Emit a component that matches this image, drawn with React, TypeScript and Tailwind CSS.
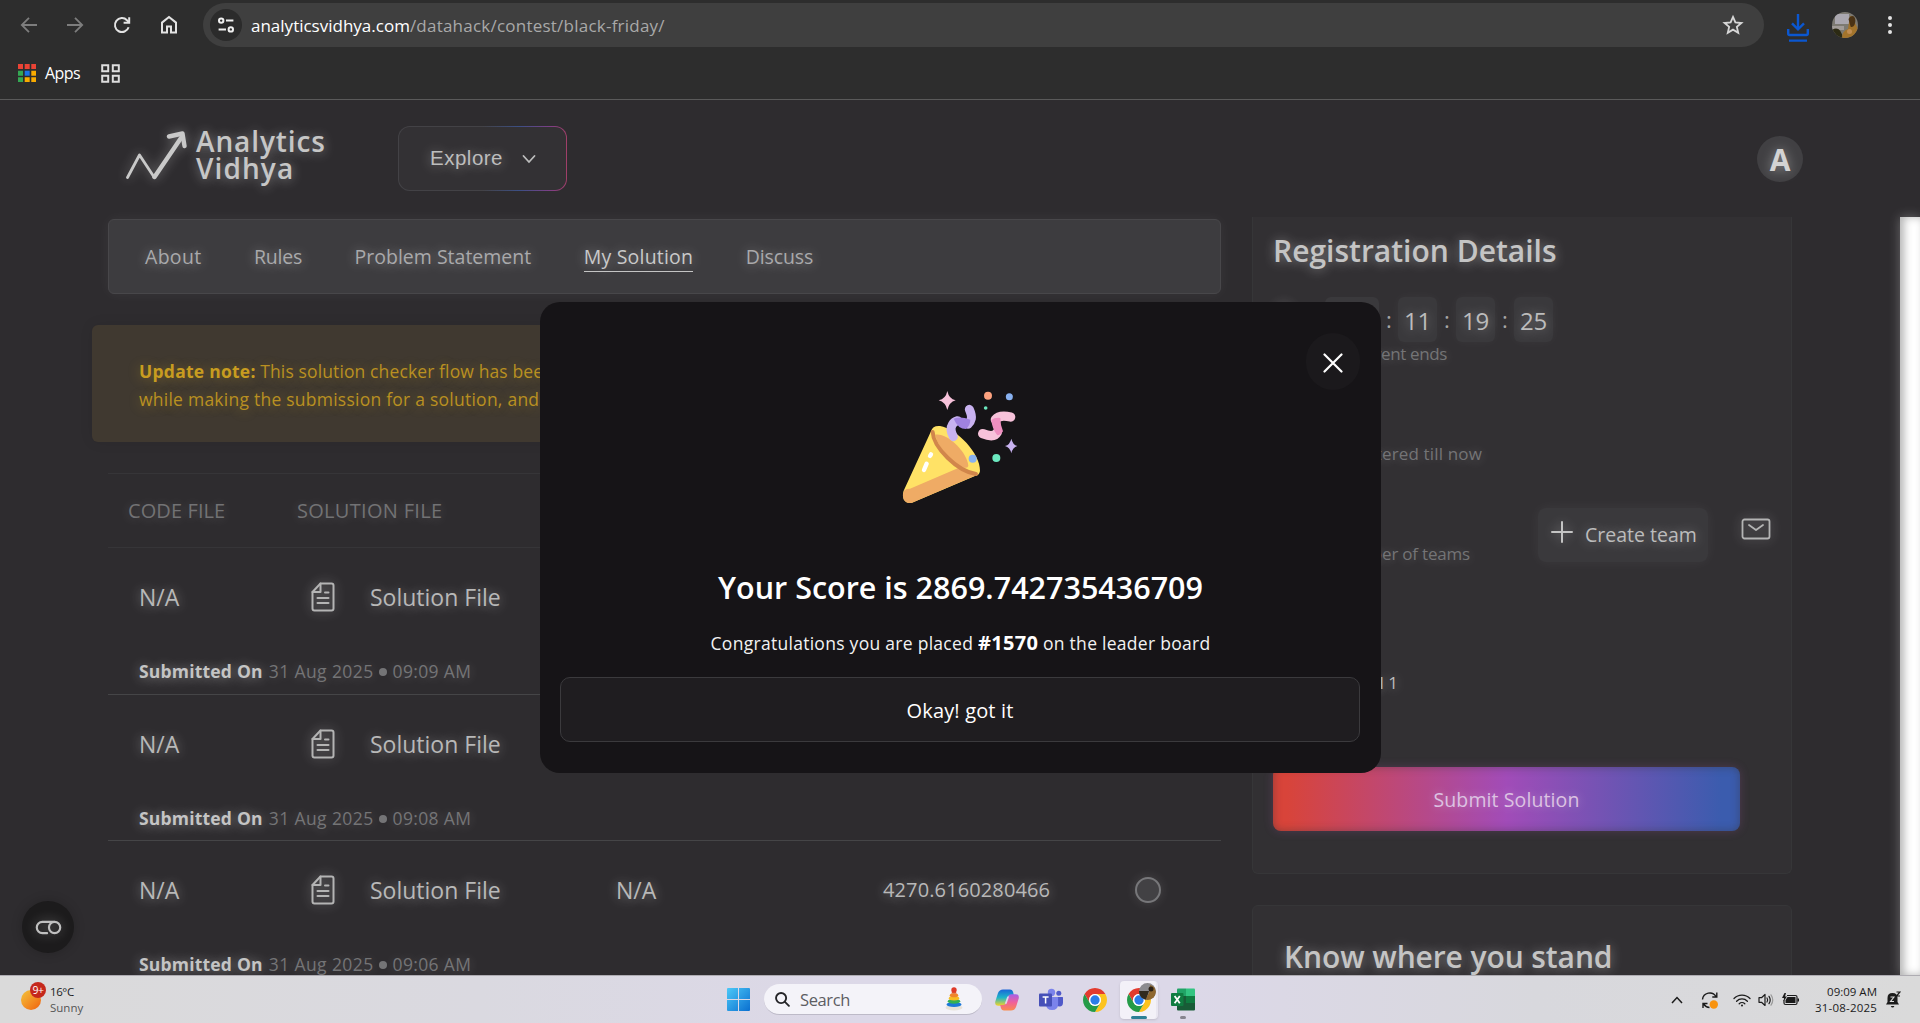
import type { ReactNode } from "react";

const glow = "[text-shadow:0_1px_12px_rgba(255,255,255,0.42)]";
const softGlow = "[text-shadow:0_1px_12px_rgba(255,255,255,0.22)]";
const iconGlow = "drop-shadow-[0_0_6px_rgba(255,255,255,0.35)]";

function BrowserBar() {
  return (
    <div className="h-[100px] border-b border-[#5a5a5a] bg-[#2d2d2d]">
      <div className="flex h-[50px] items-center pl-[18px] pr-[21px]">
        <svg className="size-[22px]" viewBox="0 0 22 22" fill="none" stroke="#7d7d7d" strokeWidth="1.8">
          <path d="M19 11H4M11 3.8 3.8 11l7.2 7.2" />
        </svg>
        <svg className="ml-[24px] size-[22px]" viewBox="0 0 22 22" fill="none" stroke="#7d7d7d" strokeWidth="1.8">
          <path d="M3 11h15M11 3.8l7.2 7.2-7.2 7.2" />
        </svg>
        <svg className="ml-[25px] size-[22px]" viewBox="0 0 22 22" fill="none" stroke="#e3e3e3" strokeWidth="2">
          <path d="M17.6 13.2A7 7 0 1 1 16 6.2l2 2" />
          <path d="M18.2 3.2v5.6h-5.6" />
        </svg>
        <svg className="ml-[25px] size-[22px]" viewBox="0 0 22 22" fill="none" stroke="#e3e3e3" strokeWidth="2">
          <path d="M4 18.5V8.6l7-5.6 7 5.6v9.9h-5v-6H9v6z" />
        </svg>
        <div className="ml-[23px] flex h-11 w-[1561px] items-center rounded-full bg-[#3f3f3f] pl-[7px] pr-[20px]">
          <div className="flex size-8 items-center justify-center rounded-full bg-[#2b2b2b]">
            <svg className="size-[18px]" viewBox="0 0 18 18" fill="none" stroke="#f1f1f1" strokeWidth="2">
              <circle cx="4.2" cy="4.6" r="2.2" />
              <path d="M9 4.6h7.4M1.6 13.4H9" />
              <circle cx="13.8" cy="13.4" r="2.2" />
            </svg>
          </div>
          <div className="ml-[9px] grow whitespace-nowrap pt-px text-[17px] leading-6 text-[#a9a9a9]">
            <span className="text-white">analyticsvidhya.com</span>
            <span className="tracking-[0.23px]">/datahack/contest/black-friday/</span>
          </div>
          <svg className="size-[22px]" viewBox="0 0 24 24" fill="none" stroke="#d6d6d6" strokeWidth="2">
            <path d="m12 3.2 2.6 6 6.6.6-5 4.3 1.5 6.4L12 17.1l-5.7 3.4 1.5-6.4-5-4.3 6.600-.6z" />
          </svg>
        </div>
        <svg className="ml-[22px] mt-[6px] h-[30px] w-[24px]" viewBox="0 0 24 30" fill="none" stroke="#0b57d0" strokeWidth="2.4">
          <path d="M12 1v15M6 10.4l6 6 6-6M2.2 16v4.6q0 1.4 1.4 1.4h16.8q1.4 0 1.4-1.4V16M3 27.6h18" />
        </svg>
        <svg className="ml-[22px] size-[26px] rounded-full" viewBox="0 0 26 26">
          <rect width="26" height="26" fill="#7d7a72" />
          <path d="M3 2h14v10H3z" fill="#aaa7af" />
          <path d="M0 14h12v4H0z" fill="#a29c98" />
          <path d="M0 18q8-5 11 8H0z" fill="#2c2a14" />
          <path d="M18 4q5 0 5 7l3 6v9H10q0-7 6-9l1-7z" fill="#a3742c" />
          <path d="M16.500 7q2-4 5.500-2.500 2.500 3 .5 8.500-2 3-4 1.500z" fill="#4b3315" />
          <circle cx="17.500" cy="19.500" r="2.500" fill="#c08d52" />
        </svg>
        <svg className="ml-auto h-[20px] w-[6px] -translate-x-1.5" viewBox="0 0 6 20" fill="#e3e3e3">
          <circle cx="3" cy="3" r="2" /><circle cx="3" cy="10" r="2" /><circle cx="3" cy="17" r="2" />
        </svg>
      </div>
      <div className="flex h-[46px] items-center pl-[18px]">
        <svg className="size-[18px]" viewBox="0 0 18 18">
          <g fill="#ea4335"><path d="M0 0h5v5H0zM6.7 0h5v5h-5zM13.3 0h4.7v5h-4.7z" /></g>
          <g fill="#34a853"><path d="M0 6.7h5v5H0zM0 13.3h5V18H0z" /></g>
          <path fill="#1a73e8" d="M6.7 6.7h5v5h-5z" />
          <path fill="#f9ab00" d="M13.3 6.7h4.7v5h-4.7zM6.7 13.3h5V18h-5zM13.3 13.3h4.7V18h-4.7z" />
        </svg>
        <span className="ml-[9px] text-[16px] leading-6 tracking-[-0.6px] text-white">Apps</span>
        <svg className="ml-[21px] size-[19px]" viewBox="0 0 19 19" fill="none" stroke="#dedede" strokeWidth="2">
          <path d="M1.2 1.2h6v6h-6zM11.8 1.2h6v6h-6zM1.2 11.8h6v6h-6zM11.8 11.8h6v6h-6z" />
        </svg>
      </div>
    </div>
  );
}

function SiteHeader() {
  return (
    <header className="flex h-[117px] items-start pl-[125px] pr-[117px]">
      <svg className={`mt-[29px] h-[54px] w-[64px] ${iconGlow}`} viewBox="0 0 64 54" fill="none" stroke="#c9c9c9" strokeLinecap="round" strokeLinejoin="round">
        <path strokeWidth="2.8" d="M2.500 48.500 14.500 26l14.500 22" />
        <path strokeWidth="4.400" d="M29.500 48 56 9" />
        <path strokeWidth="4.400" d="M44 7.500 57.500 4.500 59.500 17" />
      </svg>
      <div className={`ml-[7px] mt-[28px] text-[28px] font-semibold leading-[27px] text-[#c6c6c6] ${glow}`}>
        <div className="tracking-[0.9px]">Analytics</div>
        <div className="tracking-[1.1px]">Vidhya</div>
      </div>
      <div className="ml-auto mr-[1190px] mt-[26px] h-[65px] w-[169px] shrink-0 rounded-xl bg-[linear-gradient(90deg,#434246_0%,#434246_50%,#3c4f85_72%,#7d3f86_90%,#a03f68_100%)] p-px">
        <div className={`flex h-full items-center rounded-[11px] bg-[#333134] pl-[31px] font-['Liberation_Sans'] text-[20.5px] tracking-[0.5px] text-[#bdbdbd] ${glow}`}>
          Explore
          <svg className="ml-[19px] size-[14px]" viewBox="0 0 14 14" fill="none" stroke="#bdbdbd" strokeWidth="1.8" strokeLinecap="round">
            <path d="m1.500 4 5.500 6 5.500-6" />
          </svg>
        </div>
      </div>
      <div className="mt-[36px] flex size-[46px] shrink-0 items-center justify-center rounded-full bg-[#414043]">
        <span className={`pt-0.5 text-[30px] font-bold leading-none text-[#d3d3d3] ${glow}`}>A</span>
      </div>
    </header>
  );
}

function FileIcon() {
  return (
    <svg className={`ml-px h-[30px] w-[24px] ${iconGlow}`} viewBox="0 0 24 30" fill="none" stroke="#b4b4b4" strokeWidth="2" strokeLinecap="round" strokeLinejoin="round">
      <path d="M9.500 1.500h11q2 0 2 2v23q0 2-2 2h-17q-2 0-2-2V10z" />
      <path d="M9.500 1.500V10h-8M14 10.500h3.500M6.500 16h11M6.500 21h11" />
    </svg>
  );
}

type Entry = { time: string; code: string; score: string };

function SubmissionRow({ time, code, score }: Entry) {
  return (
    <div className="h-[146.5px] border-b border-[#454547] pl-[31px] pt-[33px]">
      <div className={`flex h-8 items-center whitespace-nowrap text-[23px] leading-8 text-[#b8b8b8] ${glow}`}>
        <span className="w-[171px]">N/A</span>
        <span className="w-[60px]"><FileIcon /></span>
        <span className="w-[246px]">Solution File</span>
        {score && (
          <>
            <span className="w-[267px]">{code}</span>
            <span className="w-[252px] text-[20px] tracking-[0.12px]">{score}</span>
            <span className="size-[26px] rounded-full border-2 border-[#77777a] bg-[#424144] shadow-[0_0_12px_rgba(255,255,255,0.12)]" />
          </>
        )}
      </div>
      <div className={`mt-[46px] flex h-6 items-center text-[17.5px] leading-6 text-[#747476] ${softGlow}`}>
        <span className={`tracking-[0.2px] font-bold text-[#c4c4c4] ${glow}`}>Submitted On</span>
        <span className="ml-[6px] tracking-[0.4px]">31 Aug 2025</span>
        <span className="ml-[5px] mt-0.5 size-2 rounded-full bg-[#747476]" />
        <span className="ml-[6px] tracking-[0.35px]">{time}</span>
      </div>
    </div>
  );
}

const entries: Entry[] = [
  { time: "09:09 AM", code: "", score: "" },
  { time: "09:08 AM", code: "", score: "" },
  { time: "09:06 AM", code: "N/A", score: "4270.6160280466" },
];

function ContestColumn() {
  return (
    <section className="w-[1129px] shrink-0 pt-[2px]">
      <nav className={`ml-[16px] flex h-[75px] items-center gap-[52.5px] rounded-md border border-[#48474a] bg-[#3d3c3f] pl-[36px] text-[19.5px] leading-7 text-[#a9a9ab] shadow-[0_0_14px_rgba(255,255,255,0.05)] ${glow}`}>
        <span className="tracking-[0.3px]">About</span>
        <span className="tracking-[-0.2px]">Rules</span>
        <span>Problem Statement</span>
        <span className="mt-px border-b border-[#c4c4c4] tracking-[0.2px] text-[#c9c9c9]">My Solution</span>
        <span className="tracking-[-0.1px]">Discuss</span>
      </nav>
      <div className="mt-[31px] h-[117px] rounded-md bg-[#403930] pl-[47px] pt-[32px] text-[17.5px] leading-7 text-[#b99021] shadow-[0_0_14px_rgba(0,0,0,0.08)] [text-shadow:0_1px_12px_rgba(200,160,40,0.4)]">
        <div className="whitespace-nowrap">
          <b className="font-bold tracking-[0.25px] text-[#c89c20]">Update note:</b>{" "}
          <span className="tracking-[0.12px]">This solution checker flow has been</span>
        </div>
        <div className="tracking-[0.24px] whitespace-nowrap">while making the submission for a solution, and</div>
      </div>
      <div className="ml-[16px] mt-[31px]">
        <div className={`flex h-[75px] border-y border-[#363538] pl-[20px] pt-[23px] text-[20px] leading-7 text-[#727274] ${softGlow}`}>
          <span className="w-[169px] tracking-[0.1px]">CODE FILE</span>
          <span className="tracking-[0.3px]">SOLUTION FILE</span>
        </div>
        {entries.map((e) => (
          <SubmissionRow key={e.time} {...e} />
        ))}
      </div>
    </section>
  );
}

function Tile({ children }: { children: ReactNode }) {
  return (
    <span className={`flex h-[45px] w-[39px] items-center justify-center rounded-md bg-[#3a393c] pt-0.5 text-[24px] tracking-[-0.2px] text-[#bcbcbc] shadow-[0_0_12px_rgba(255,255,255,0.04)] ${glow}`}>
      {children}
    </span>
  );
}

function Colon() {
  return <span className="w-[19px] pl-px text-center text-[22px] text-[#a5a5a5]">:</span>;
}

function DetailsColumn() {
  return (
    <aside className="ml-[31px] w-[540px] shrink-0">
      <div className="h-[657px] rounded-b-md border border-t-0 border-[#363638] bg-[#323033] pl-[22px] pt-[14px]">
        <h2 className={`-ml-[2px] text-[30px] font-semibold leading-10 text-[#c4c4c4] ${glow}`}>Registration Details</h2>
        <div className="mt-[26px] flex h-[45px] items-center">
          <span className="mr-[32px] mb-[14px] size-[18px] rounded-full bg-[#5a595c] shadow-[0_0_12px_2px_rgba(255,255,255,0.14)]" />
          <span className="h-[45px] w-[54px] rounded-md bg-[#3a393c]" />
          <Colon /><Tile>11</Tile><Colon /><Tile>19</Tile><Colon /><Tile>25</Tile>
        </div>
        <div className={`w-[172px] text-right text-[17px] leading-6 tracking-[-0.37px] text-[#747476] ${softGlow}`}>Event ends</div>
        <div className={`mt-[76px] w-[207px] text-right text-[17px] leading-6 tracking-[0.15px] text-[#747476] ${softGlow}`}>Registered till now</div>
        <div className="mt-[42px] flex h-[57px] items-start">
          <span className={`mt-[34px] w-[195px] text-right text-[17px] leading-6 tracking-[-0.2px] text-[#747476] ${softGlow}`}>Number of teams</span>
          <div className={`ml-[68px] flex h-[54px] w-[170px] rounded-lg bg-[#3a393c] pl-[13px] shadow-[0_0_14px_rgba(255,255,255,0.05)] ${glow}`}>
            <svg className={`mt-[13px] size-[22px] ${iconGlow}`} viewBox="0 0 22 22" stroke="#c4c4c4" strokeWidth="2" strokeLinecap="round">
              <path d="M11 1v20M1 11h20" />
            </svg>
            <span className="ml-[12px] mt-[13px] text-[19.5px] leading-7 whitespace-nowrap text-[#bcbcbc]">Create team</span>
          </div>
          <svg className={`ml-[33px] mt-[10px] h-[22px] w-[30px] ${iconGlow}`} viewBox="0 0 30 22" fill="none" stroke="#b4b4b4" strokeWidth="1.8" strokeLinecap="round" strokeLinejoin="round">
            <rect x="1.500" y="1.500" width="27" height="19" rx="2" />
            <path d="m8 7 7 5 7-5" />
          </svg>
        </div>
        <div className={`mt-[106px] w-[123px] text-right text-[17px] leading-6 font-medium text-[#bcbcbc] ${glow}`}>Total 1</div>
        <div className="-ml-[2px] mt-[72px] flex h-[64px] w-[467px] items-center justify-center rounded-lg bg-[linear-gradient(90deg,#d8443a_3%,#a14cb8_50%,#3b5cae_96%)] pt-0.5 text-[19.5px] tracking-[0.1px] text-[#dcc2e2] shadow-[0_0_10px_rgba(170,90,170,0.25),inset_0_0_8px_rgba(50,48,51,0.45)] [text-shadow:0_0_10px_rgba(255,255,255,0.35)]">
          Submit Solution
        </div>
      </div>
      <div className="mt-[31px] h-[200px] rounded-md border border-[#363638] bg-[#323033] pl-[31px] pt-[31px]">
        <h2 className={`text-[30px] font-semibold leading-10 tracking-[-0.1px] text-[#c4c4c4] ${glow}`}>Know where you stand</h2>
      </div>
    </aside>
  );
}

function PartyPopper() {
  return (
    <svg className="-ml-[2px] h-[150px] w-[200px]" viewBox="0 0 600 450" fill="none">
      <path d="M213 184Q218 166 240 168C290 176 362 250 360 303Q358 316 345 318L156 398Q138 402 131 388 126 376 131 362z" fill="#ffe266" />
      <path d="m140 357 10-1 145-62 55 21-194 83q-18 4-25-10-5-12 1-26z" fill="#efab65" />
      <path d="M226 194C262 188 322 246 325 288Q322 298 300 290C268 272 232 228 226 194z" fill="#efab65" />
      <path d="M218 186C220 232 292 304 348 312" stroke="#d1864b" strokeWidth="12" strokeLinecap="round" />
      <path d="m213 253-3 5M200 281l-8 19" stroke="#fff" strokeWidth="13" strokeLinecap="round" />
      <path d="M280 200q-12-22-3-36 5-9 16-12" stroke="#c8b2f0" strokeWidth="27" strokeLinecap="round" />
      <path d="M328 118q8 18 6 28-2 10-10 17" stroke="#c8b2f0" strokeWidth="27" strokeLinecap="round" />
      <path d="M281 146q20-8 50 3 0 16-13 28-24 0-37-31z" fill="#a082e0" />
      <path d="M452 141q-34-8-46 8" stroke="#f7c2da" strokeWidth="28" strokeLinecap="round" />
      <path d="M368 191q34 14 44-4" stroke="#f7c2da" strokeWidth="28" strokeLinecap="round" />
      <path d="M394 150q10-8 27-6 0 20 8 40-8 12-17 12-16-20-18-46z" fill="#ef8fc0" />
      <path d="M262 63q5 24 25 28-20 6-25 29-5-23-26-29 21-4 26-28z" fill="#f7c2da" />
      <path d="M454 206q4 18 18 22-14 4-18 22-4-18-19-22 15-4 19-22z" fill="#c8b2f0" />
      <circle cx="384" cy="77" r="12" fill="#fda27f" />
      <circle cx="448" cy="80" r="10.500" fill="#88b1f0" />
      <circle cx="377" cy="114" r="5.500" fill="#6ce9c0" />
      <circle cx="338" cy="266" r="12" fill="#88b1f0" />
      <circle cx="409" cy="264" r="12" fill="#6ce9c0" />
    </svg>
  );
}

function ScoreDialog() {
  return (
    <div className="absolute left-[540px] top-[302px] flex h-[471px] w-[841px] flex-col items-center rounded-[20px] bg-[#161417] pt-[68px] text-white">
      <div className="absolute right-[21px] top-[31px] flex h-[57px] w-[54px] items-center justify-center rounded-full bg-[#1b191c]">
        <svg className="mt-[3px] size-[20px]" viewBox="0 0 20 20" stroke="#fff" strokeWidth="2.200" strokeLinecap="round">
          <path d="m1.500 1.500 17 17M18.500 1.500l-17 17" />
        </svg>
      </div>
      <PartyPopper />
      <h1 className="mt-[47px] text-[30.5px] font-semibold leading-10">Your Score is 2869.742735436709</h1>
      <p className="mt-[24px] h-6 text-[17.5px] leading-6 tracking-[0.28px] text-[#f2f2f2]">
        Congratulations you are placed <b className="text-[20px] font-bold leading-none tracking-[0.3px] text-white">#1570</b> on the leader board
      </p>
      <div className="-ml-px mt-[22px] flex h-[65px] w-[800px] items-center justify-center rounded-[10px] border border-[#3b3a3d] bg-[#1f1d20] pt-0.5 text-[20px] tracking-[0.15px]">
        Okay! got it
      </div>
    </div>
  );
}

function ChromeIcon() {
  return (
    <svg className="size-[24px]" viewBox="2 2 44 44">
      <path fill="#e33b2e" d="M24 13h19.050A22 22 0 0 0 4.950 13l9.520 16.500A11 11 0 0 1 24 13z" />
      <path fill="#fcc31e" d="M43.050 13A22 22 0 0 1 24 46l9.530-16.500A11 11 0 0 0 24 13z" />
      <path fill="#259b48" d="M24 46A22 22 0 0 1 4.950 13l9.520 16.500a11 11 0 0 0 19.060 0z" />
      <circle cx="24" cy="24" r="11" fill="#fff" />
      <circle cx="24" cy="24" r="8.500" fill="#2b7de9" />
    </svg>
  );
}

function Taskbar() {
  return (
    <footer className="relative flex h-[48px] items-center border-t border-[#aeacb2] bg-[linear-gradient(90deg,#dadada_0%,#dad9e0_25%,#dcd8e8_45%,#dcd8e8_62%,#d8d8dd_80%,#dadada_100%)] pl-[21px] pr-[19px] text-[11.5px] leading-4 text-[#1b1b1b]">
      <div className="relative mt-[-8px] h-[28px] w-[26px]">
        <span className="absolute bottom-0 left-0 size-[20px] rounded-full bg-linear-to-br from-[#f2c33a] to-[#ee5e0b]" />
        <span className="absolute left-[9px] top-0 flex size-[16px] items-center justify-center rounded-full bg-[#c5281c] text-[10.5px] tracking-[-0.5px] text-white">9+</span>
      </div>
      <div className="ml-[3px] w-[677px]">
        <div className="tracking-[-0.4px]">16°C</div>
        <div className="text-[#555]">Sunny</div>
      </div>
      <svg className="size-[23px]" viewBox="0 0 23 23">
        <defs>
          <linearGradient id="win" x2="1" y2="1"><stop stopColor="#4cc8f7" /><stop offset="1" stopColor="#0a6fd0" /></linearGradient>
        </defs>
        <path fill="url(#win)" d="M0 1q0-1 1-1h10v11H0zM12 0h10q1 0 1 1v10H12zM0 12h11v11H1q-1 0-1-1zM12 12h11v10q0 1-1 1H12z" />
      </svg>
      <div className="ml-[14px] flex h-[31px] w-[218px] items-center rounded-full border-b border-[#bdbac8] bg-[#f4f3f9] pl-[11px] pr-[19px] text-[#5d5d63]">
        <svg className="size-[15px]" viewBox="0 0 16 16" fill="none" stroke="#242428" strokeWidth="2" strokeLinecap="round">
          <circle cx="6.500" cy="6.500" r="5.400" /><path d="m10.600 10.600 4.200 4.200" />
        </svg>
        <span className="ml-[10px] pt-px text-[16.5px] leading-6 tracking-[-0.38px]">Search</span>
        <svg className="ml-auto h-[24px] w-[18px]" viewBox="0 0 18 24">
          <ellipse cx="9" cy="20.500" rx="8.500" ry="3" fill="#e8e2d8" />
          <ellipse cx="9" cy="17.500" rx="7.500" ry="2.600" fill="#1c78d8" />
          <ellipse cx="9" cy="14.300" rx="6.200" ry="2.400" fill="#33b052" />
          <ellipse cx="9" cy="11.200" rx="5.200" ry="2.200" fill="#f7bd23" />
          <ellipse cx="9" cy="8.300" rx="4.200" ry="2" fill="#f0852b" />
          <path d="M6.300 6.500 7.500 4h3l1.200 2.500z" fill="#e05a2b" />
          <circle cx="9" cy="2.900" r="2.700" fill="#df3a2a" />
        </svg>
      </div>
      <svg className="ml-[13px] size-[24px]" viewBox="0 0 24 24">
        <defs>
          <linearGradient id="cpA" y2="1" x2="0"><stop stopColor="#1a66d8" /><stop offset=".5" stopColor="#1fb4c8" /><stop offset="1" stopColor="#f3d328" /></linearGradient>
          <linearGradient id="cpB" y2="1" x2="0"><stop stopColor="#a560e8" /><stop offset=".5" stopColor="#f0609a" /><stop offset="1" stopColor="#fb8a4c" /></linearGradient>
        </defs>
        <path fill="url(#cpA)" d="M8 1.500h7q2.500 0 3.200 3l.6 2.500h-3q-2.300 0-3 2.300L10.600 16q-.7 1.700-2.600 1.700H3.300Q-.5 17.700.3 13.500L3 5q1.400-3.500 5-3.500z" />
        <path fill="url(#cpB)" d="M16 22.500H9q-2.500 0-3.200-3L5.200 17h3q2.300 0 3-2.300L13.400 8q.7-1.700 2.600-1.700h4.700q3.800 0 3 4.200L21 19q-1.400 3.500-5 3.500z" />
        <path fill="#dcd8e8" d="m12.300 8.500-2.500 7.300h1.800l2.500-7.300z" />
      </svg>
      <svg className="ml-[20px] size-[24px]" viewBox="0 0 24 24">
        <circle cx="19.800" cy="5.300" r="2.500" fill="#5059c9" />
        <path fill="#5059c9" d="M17 9h6.500q.5 0 .5.600v5q0 4-3.500 4T17 15z" />
        <circle cx="12.500" cy="4.500" r="3.700" fill="#7b83eb" />
        <path fill="#7b83eb" d="M7 9h11.500q.6 0 .6.600V16q0 6-6 6t-6-6z" />
        <rect y="5.500" width="13" height="13" rx="1" fill="#4650b8" />
        <path d="M3.600 9h6M6.600 9v6.600" stroke="#fff" strokeWidth="1.500" />
      </svg>
      <div className="ml-[20px]"><ChromeIcon /></div>
      <div className="relative ml-[13px] flex h-[38px] w-[38px] items-center rounded-[4px] border-r-2 border-[#e9e6f1] bg-[#f3f1f8] pl-[7px] shadow-sm">
        <ChromeIcon />
        <svg className="absolute left-[19px] top-[2px] size-[17px] rounded-full" viewBox="0 0 17 17">
          <rect width="17" height="17" fill="#8c8c90" />
          <path d="M0 8h10L7 17H0z" fill="#312b1e" />
          <path d="M11 2q6 1 6 8l-3 7H7q1-5 3-7z" fill="#8e672f" />
          <circle cx="12" cy="6" r="2.500" fill="#2b2116" />
        </svg>
        <span className="absolute bottom-0 left-[11px] h-[3px] w-[16px] rounded-full bg-[#2c8096]" />
      </div>
      <div className="relative ml-[13px]">
        <svg className="size-[24px]" viewBox="0 0 24 24">
          <path fill="#21a366" d="M6 1.500Q6 .5 7 .5h8v7.500H6z" />
          <path fill="#33c481" d="M15 .5h8q1 0 1 1V8h-9z" />
          <path fill="#107c41" d="M15 8h9v7h-9z" />
          <path fill="#185c37" d="M6 8h9v7h9v6.500q0 1-1 1H7q-1 0-1-1z" />
          <rect y="5" width="12.500" height="13" rx="1" fill="#107c41" />
          <path d="m3.600 8 5.200 7.200M8.800 8l-5.200 7.200" stroke="#fff" strokeWidth="1.800" />
        </svg>
        <span className="absolute -bottom-[7px] left-[9px] h-[3px] w-[6px] rounded-full bg-[#87848f]" />
      </div>
      <div className="ml-auto flex items-center">
        <svg className="h-[8px] w-[12px]" viewBox="0 0 12 8" fill="none" stroke="#1b1b1b" strokeWidth="1.500"><path d="m1 7 5-5.500L11 7" /></svg>
        <svg className="ml-[18px] size-[18px]" viewBox="0 0 18 18" fill="none" stroke="#1b1b1b" strokeWidth="1.400">
          <path d="M1.500 8.500A7.300 7.300 0 0 1 15 5.500M15.800 1.500v4.500h-4.500M2 17v-4.500h4.500M2.500 13q2.300 3.300 6 3.500" />
          <circle cx="12.800" cy="13.500" r="4.200" fill="#f8930f" stroke="none" />
        </svg>
        <svg className="ml-[14px] h-[14px] w-[18px]" viewBox="0 0 18 14" fill="none" stroke="#1b1b1b" strokeWidth="1.300" strokeLinecap="round">
          <path d="M1 5.500a11.300 11.300 0 0 1 16 0M3.600 8.200a7.600 7.600 0 0 1 10.800 0M6.200 10.700a4 4 0 0 1 5.600 0" />
          <circle cx="9" cy="12.600" r="1" fill="#1b1b1b" stroke="none" />
        </svg>
        <svg className="ml-[7px] h-[14px] w-[16px]" viewBox="0 0 16 14" fill="none" stroke="#1b1b1b" strokeWidth="1.200" strokeLinecap="round" strokeLinejoin="round">
          <path d="M1 4.700h2.500L7 1.500v11L3.500 9.300H1z" /><path d="M9 5q1.300 2 0 4M11 3.300q2.400 3.700 0 7.400" /><path stroke="#9a9a9a" d="M13 1.800q3.500 5.200 0 10.400" />
        </svg>
        <svg className="ml-[8px] h-[13px] w-[17px]" viewBox="0 0 17 13">
          <path d="M5 2.500h8.500q1.500 0 1.500 1.500v6q0 1.500-1.500 1.500h-10Q2 11.500 2 10V7" fill="none" stroke="#1b1b1b" strokeWidth="1.200" />
          <path d="M5.500 4h8v6h-10V7zM15.500 5.500H17v3h-1.500zM2.500 0 0 5h2L1.500 8.500 5 3.500H3L4 0z" fill="#1b1b1b" />
        </svg>
        <div className="ml-[14px] w-[64px] text-right">
          <div>09:09 AM</div>
          <div className="tracking-[0.2px]">31-08-2025</div>
        </div>
        <svg className="ml-[9px] h-[17px] w-[15px]" viewBox="0 0 15 17">
          <path d="M1.500 7Q1.500 2 6.500 2T11.500 7v4l1.500 2.500H0L1.500 11z" fill="#1b1b1b" />
          <path d="M4.800 15h3.600q-.5 1.500-1.800 1.500T4.800 15z" fill="#1b1b1b" />
          <path d="M4.500 6h3.500l-3.500 4.500H8" stroke="#dadada" strokeWidth="1.100" fill="none" />
          <path d="M10.500 1H14l-3.500 4H14" stroke="#1b1b1b" strokeWidth="1.200" fill="none" />
        </svg>
      </div>
    </footer>
  );
}

export default function App() {
  return (
    <div className="relative flex h-[1023px] w-[1920px] flex-col overflow-hidden bg-[#2e2c2f] font-['Open_Sans','Noto_Sans',sans-serif]">
      <BrowserBar />
      <div className="flex h-[875px] flex-col overflow-hidden">
        <SiteHeader />
        <main className="flex h-[758px] pl-[92px]">
          <ContestColumn />
          <DetailsColumn />
          <div className="ml-auto w-[20px] bg-white shadow-[0_0_12px_rgba(255,255,255,0.3),inset_4px_0_8px_rgba(0,0,0,0.3)]" />
        </main>
      </div>
      <div className="absolute left-[22px] top-[901px] flex size-[52px] items-center justify-center rounded-full bg-[#1c1b1c] shadow-[0_0_12px_rgba(0,0,0,0.2)]">
        <svg className={`h-[15px] w-[27px] ${iconGlow}`} viewBox="0 0 28 16" fill="none" stroke="#c0c0c0" strokeWidth="2.300" strokeLinecap="round">
          <path d="M12.500 14H7.500A6 6 0 0 1 7.500 2H20" /><circle cx="20.500" cy="8" r="6" />
        </svg>
      </div>
      <ScoreDialog />
      <Taskbar />
    </div>
  );
}
